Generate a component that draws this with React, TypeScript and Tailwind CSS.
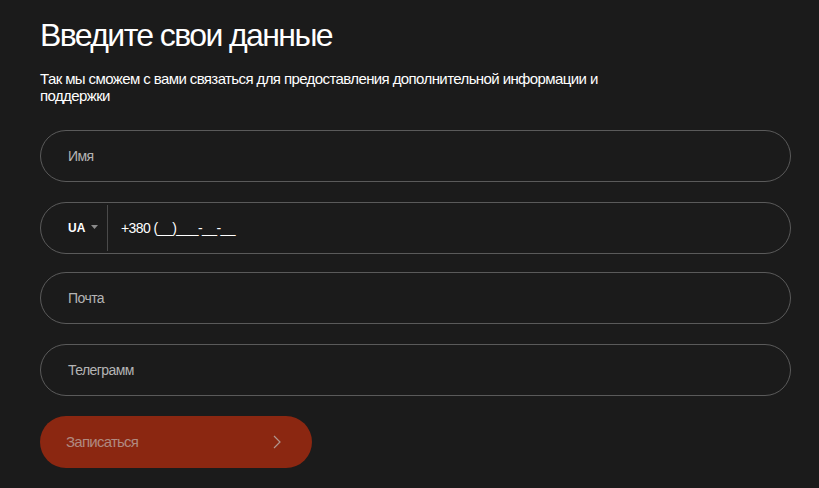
import React from 'react';

const Field: React.FC<{ placeholder: string }> = ({ placeholder }) => (
    <div className="h-[52px] rounded-full border border-[#5a5a5a] flex items-center px-[27px]">
        <span className="text-[14px] text-[#b4b4b4] tracking-[-0.04em]">{placeholder}</span>
    </div>
);

export default function App() {
    return (
        <div
            className="w-[819px] h-[488px] bg-[#1b1b1b] text-white overflow-hidden pl-10 pt-[16px]"
            style={{ fontFamily: '"Liberation Sans", Arial, sans-serif' }}
        >
            <h1 className="text-[32px] leading-[38px] font-normal tracking-[-0.05em] text-white">
                Введите свои данные
            </h1>
            <p className="mt-[16px] w-[580px] text-[15px] leading-[17px] tracking-[-0.04em] text-white">
                Так мы сможем с вами связаться для предоставления дополнительной информации и поддержки
            </p>

            <div className="mt-[26px] w-[751px] flex flex-col gap-5">
                <Field placeholder="Имя" />

                {/* Phone */}
                <div className="h-[52px] -mb-[2px] rounded-full border border-[#5a5a5a] flex items-center">
                    <div className="w-[67px] flex items-center pl-[27px] gap-[6px] border-r border-[#4a4a4a] self-stretch my-[2px]">
                        <span className="text-[12px] font-bold text-white">UA</span>
                        <svg width="7" height="4" viewBox="0 0 7 4" className="mb-[2px]">
                            <path d="M0 0 L7 0 L3.5 4 Z" fill="#8a8a8a" />
                        </svg>
                    </div>
                    <span className="ml-[13px] text-[14px] tracking-[-0.04em] text-white">
                        +380 (__)___-__-__
                    </span>
                </div>

                <Field placeholder="Почта" />
                <Field placeholder="Телеграмм" />

                <button className="w-[272px] h-[52px] rounded-full bg-[#8b2711] flex items-center justify-between pl-[26px] pr-[31px]">
                    <span className="text-[15px] tracking-[-0.05em] text-[#b08a80]">Записаться</span>
                    <svg width="8" height="14" viewBox="0 0 8 14" fill="none">
                        <path d="M1 1 L7 7 L1 13" stroke="#b0968f" strokeWidth="1.2" />
                    </svg>
                </button>
            </div>
        </div>
    );
}
